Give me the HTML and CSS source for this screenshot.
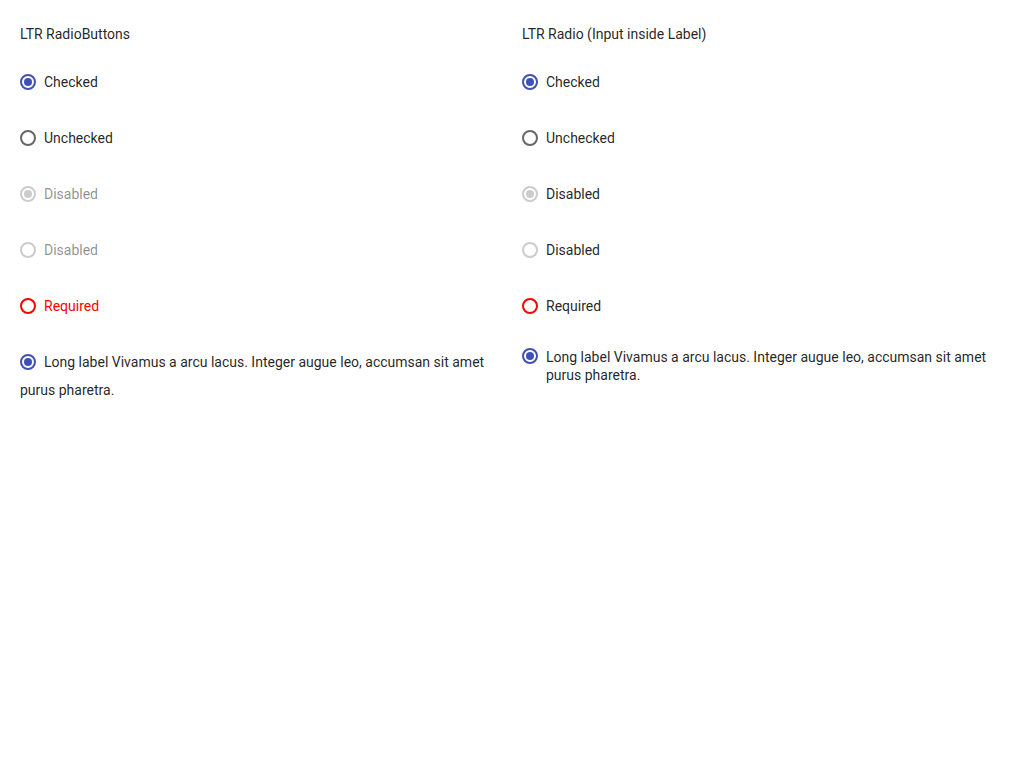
FILE: index.html
```html
<!DOCTYPE html>
<html>
<head>
<meta charset="utf-8">
<link rel="stylesheet" href="styles.css">
</head>
<body>
<div class="page">
  <section class="col">
    <h2 class="title">LTR RadioButtons</h2>
    <div class="item"><span class="radio checked"></span><span class="lbl">Checked</span></div>
    <div class="item"><span class="radio"></span><span class="lbl">Unchecked</span></div>
    <div class="item disabled"><span class="radio checked"></span><span class="lbl">Disabled</span></div>
    <div class="item disabled"><span class="radio"></span><span class="lbl">Disabled</span></div>
    <div class="item required"><span class="radio"></span><span class="lbl">Required</span></div>
    <div class="item"><span class="radio checked"></span><span class="lbl">Long label Vivamus a arcu lacus. Integer augue leo, accumsan sit amet purus pharetra.</span></div>
  </section>
  <section class="col">
    <h2 class="title">LTR Radio (Input inside Label)</h2>
    <label class="row"><span class="radio checked"></span><span>Checked</span></label>
    <label class="row"><span class="radio"></span><span>Unchecked</span></label>
    <label class="row"><span class="radio checked dis"></span><span>Disabled</span></label>
    <label class="row"><span class="radio dis"></span><span>Disabled</span></label>
    <label class="row"><span class="radio req"></span><span>Required</span></label>
    <label class="row long"><span class="radio checked"></span><span>Long label Vivamus a arcu lacus. Integer augue leo, accumsan sit amet purus pharetra.</span></label>
  </section>
</div>
</body>
</html>
```

FILE: styles.css
```css
html, body {
  margin: 0;
  padding: 0;
  background: #fff;
}
body {
  font-family: Roboto, "Liberation Sans", sans-serif;
  font-size: 14px;
  color: rgba(0, 0, 0, 0.87);
}
.page {
  display: grid;
  grid-template-columns: 1fr 1fr;
  column-gap: 20px;
  padding: 24px 20px;
  align-items: start;
}
.col {
  display: flex;
  flex-direction: column;
}
.title {
  margin: 0 0 24px;
  font-size: 14px;
  font-weight: 400;
  line-height: 20px;
}
.radio {
  box-sizing: border-box;
  width: 16px;
  height: 16px;
  border: 2px solid #666;
  border-radius: 50%;
  display: inline-flex;
  align-items: center;
  justify-content: center;
  flex: none;
}
.radio.checked {
  border-color: #3f51b5;
}
.radio.checked::after {
  content: "";
  width: 8px;
  height: 8px;
  border-radius: 50%;
  background: #3f51b5;
}
/* left column: inline flow */
.item {
  line-height: 28px;
  margin-bottom: 28px;
}
.item .radio {
  vertical-align: middle;
  margin-right: 8px;
  position: relative;
  top: -1px;
}
.item.disabled {
  color: rgba(0, 0, 0, 0.45);
}
.item.disabled .radio,
.radio.dis {
  border-color: #ccc;
}
.item.disabled .radio.checked::after,
.radio.dis.checked::after {
  background: #ccc;
}
.item.required {
  color: #f00;
}
.item.required .radio,
.radio.req {
  border-color: #f00;
}
/* right column: flex label */
.row {
  display: flex;
  align-items: center;
  gap: 8px;
  min-height: 28px;
  line-height: 18px;
  margin-bottom: 28px;
}
.row.long {
  align-items: flex-start;
}
```
